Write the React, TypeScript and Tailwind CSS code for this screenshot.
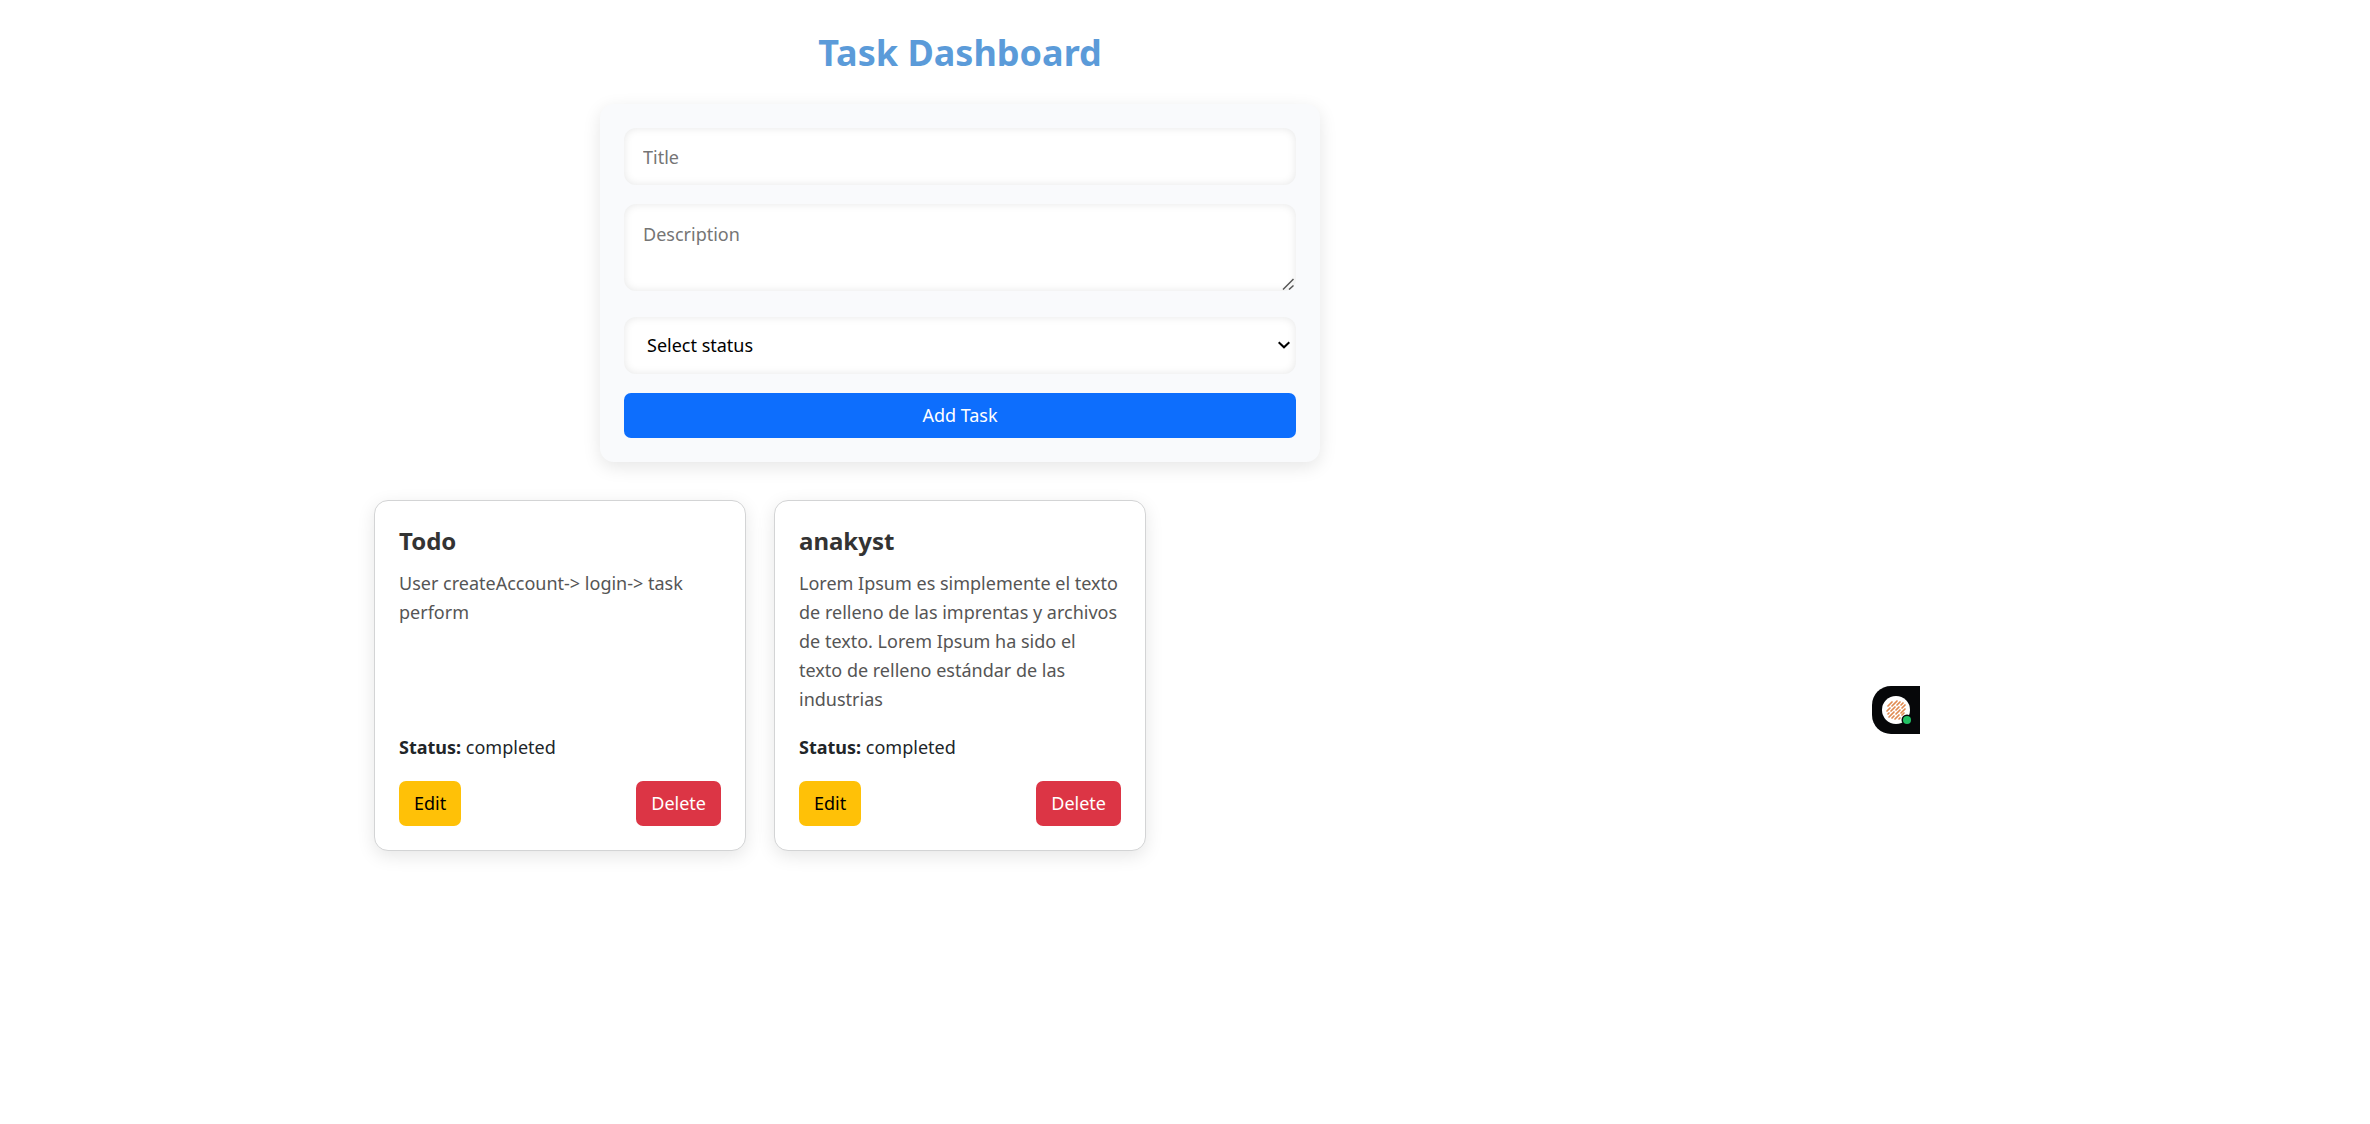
import React from "react";

type Task = { id: number; title: string; description: string; status: string };

const tasks: Task[] = [
  { id: 1, title: "Todo", description: "User createAccount-> login-> task perform", status: "completed" },
  {
    id: 2,
    title: "anakyst",
    description:
      "Lorem Ipsum es simplemente el texto de relleno de las imprentas y archivos de texto. Lorem Ipsum ha sido el texto de relleno estándar de las industrias",
    status: "completed",
  },
];

const field =
  "block w-full rounded-xl border-0 bg-white text-[18px] shadow-[inset_0_0_8px_rgba(0,0,0,0.1)] outline-none placeholder:text-[#757575]";

function TaskForm() {
  return (
    <form
      className="mx-auto w-full max-w-[720px] rounded-[14px] bg-[#f9fafc] p-6 shadow-[0_5px_18px_rgba(0,0,0,0.1)]"
      onSubmit={(e) => e.preventDefault()}
    >
      <input aria-label="Title" placeholder="Title" className={`${field} mb-[19px] h-[57px] px-[19px]`} />
      <div className="relative mb-[26px]">
        <textarea
          aria-label="Description"
          placeholder="Description"
          className={`${field} h-[87px] resize-y px-[19px] py-[17px] leading-[26px] [&::-webkit-resizer]:hidden`}
        />
        <svg
          viewBox="0 0 12 12"
          className="pointer-events-none absolute right-0.5 bottom-px size-3 text-[#555]"
          fill="none"
          stroke="currentColor"
          strokeWidth="1.5"
          aria-hidden="true"
        >
          <path d="M1 11.5L11.5 1M7 11.5L11.5 7.5" />
        </svg>
      </div>
      <div className="relative mb-[19px]">
        <select
          aria-label="Status"
          defaultValue=""
          className={`${field} h-[57px] appearance-none pr-8 pl-[23px] text-black`}
        >
          <option value="">Select status</option>
          <option value="pending">Pending</option>
          <option value="completed">Completed</option>
        </select>
        <svg
          viewBox="0 0 12 8"
          className="pointer-events-none absolute top-6 right-1.5 h-2 w-3 text-black"
          fill="none"
          stroke="currentColor"
          strokeWidth="2"
          aria-hidden="true"
        >
          <path d="M0.7 1.2L6 6.3L11.3 1.2" />
        </svg>
      </div>
      <button type="submit" className="h-[45px] w-full rounded-[7px] bg-[#0d6efd] text-[18px] text-white">
        Add Task
      </button>
    </form>
  );
}

function TaskCard({ task }: { task: Task }) {
  return (
    <article className="flex flex-col rounded-[14px] border border-[#d3d4d5] bg-white p-6 shadow-[0_5px_18px_rgba(0,0,0,0.1)]">
      <h2 className="mb-3 text-[24px] leading-8 font-bold text-[#333]">{task.title}</h2>
      <p className="mb-[19px] grow text-[18px] leading-[29px] text-[#555]">{task.description}</p>
      <p className="mb-[19px] text-[18px] leading-[29px]">
        <strong className="font-bold">Status:</strong> {task.status}
      </p>
      <div className="flex justify-between">
        <button type="button" className="h-[45px] rounded-[7px] bg-[#ffc107] px-[15px] text-[18px] text-black">
          Edit
        </button>
        <button type="button" className="h-[45px] rounded-[7px] bg-[#dc3545] px-[15px] text-[18px] text-white">
          Delete
        </button>
      </div>
    </article>
  );
}

function AssistantButton() {
  return (
    <button
      type="button"
      aria-label="Open assistant"
      className="absolute top-[686px] right-0 flex h-12 w-12 items-center justify-center rounded-l-[19px] bg-[#060709]"
    >
      <svg viewBox="0 0 48 48" className="size-12" aria-hidden="true">
        <circle cx="24" cy="24" r="14" fill="#fff" />
        <g stroke="#e08a50" strokeWidth="1.7" strokeLinecap="round">
          <path d="M16 20L20 16" />
          <path d="M15 25L18 22M20 20L25 15" />
          <path d="M16 28L17 27M19 25L23 21M25 19L28 16" />
          <path d="M17 31L22 26M24 24L27 21M29 19L31 17" />
          <path d="M20 32L22 30M24 28L28 24M30 22L33 19" />
          <path d="M23 33L27 29M29 27L33 23" />
          <path d="M27 33L28 32M30 29L32 27" />
        </g>
        <circle cx="35" cy="34" r="5.5" fill="#060709" />
        <circle cx="35" cy="34" r="4" fill="#22c063" />
      </svg>
    </button>
  );
}

export default function App() {
  return (
    <div className="min-h-screen bg-white">
      <div className="relative w-full max-w-[1920px] pt-[25px] pb-12 font-['Noto_Sans','Open_Sans',sans-serif] text-[#212529]">
        <h1 className="mb-[23px] text-center text-[36px] leading-[56px] font-bold text-[#5b9bd9]">Task Dashboard</h1>
        <TaskForm />
        <main className="mx-auto mt-[38px] grid max-w-[1172px] grid-cols-3 gap-7">
          {tasks.map((task) => (
            <TaskCard key={task.id} task={task} />
          ))}
        </main>
        <AssistantButton />
      </div>
    </div>
  );
}
